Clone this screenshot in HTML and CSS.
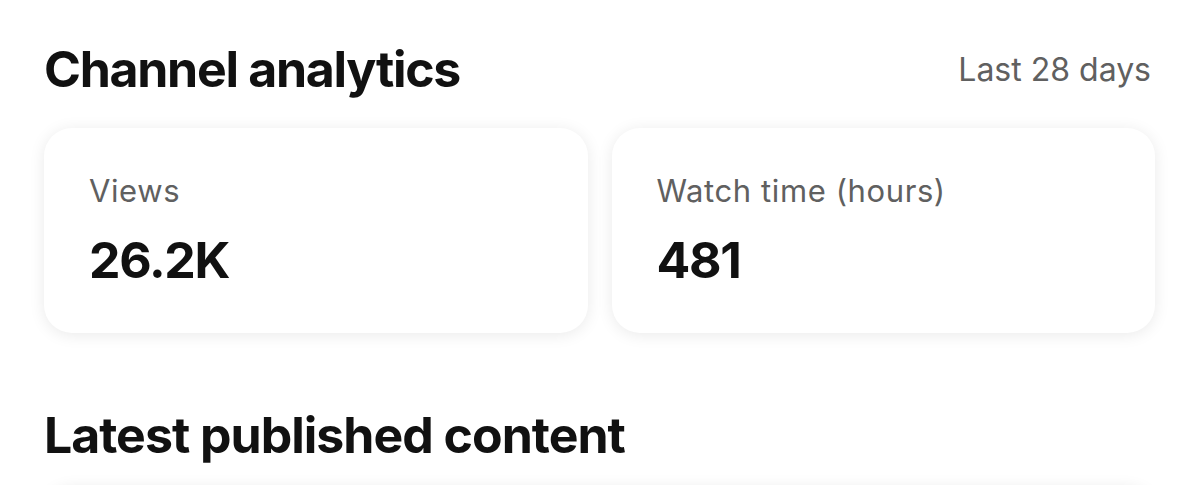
FILE: index.html
```html
<!DOCTYPE html>
<html lang="en">
<head>
<meta charset="utf-8">
<title>Channel analytics</title>
<link rel="stylesheet" href="styles.css">
</head>
<body>
<main class="page">
  <header class="section-head">
    <h1 class="section-title">Channel analytics</h1>
    <span class="period">Last 28 days</span>
  </header>
  <div class="stats">
    <div class="stat-card">
      <div class="stat-label">Views</div>
      <div class="stat-value">26.2K</div>
    </div>
    <div class="stat-card">
      <div class="stat-label">Watch time (hours)</div>
      <div class="stat-value">481</div>
    </div>
  </div>
  <h2 class="section-title latest">Latest published content</h2>
  <div class="content-card"></div>
</main>
</body>
</html>
```
FILE: styles.css
```css
* { box-sizing: border-box; }

html, body {
  margin: 0;
  height: 100%;
  background: #ffffff;
}

body {
  font-family: Inter, "Noto Sans", Roboto, sans-serif;
  color: #111111;
  overflow: hidden;
}

.page {
  height: 100%;
  overflow: hidden;
  padding: 39px 44px 0 44px;
}

.section-head {
  display: flex;
  justify-content: space-between;
  align-items: center;
}

.section-title {
  margin: 0;
  font-size: 50px;
  font-weight: 700;
  line-height: 60px;
  letter-spacing: -1.3px;
  color: #111111;
}

.period {
  font-size: 32px;
  line-height: 40px;
  color: #606060;
  padding-right: 4px;
  margin-top: 2px;
}

.stats {
  display: grid;
  grid-template-columns: 1fr 1fr;
  gap: 24px;
  margin-top: 29px;
}

.stat-card {
  height: 205px;
  background: #ffffff;
  border-radius: 28px;
  box-shadow: 0 2px 16px rgba(0, 0, 0, 0.085);
  padding: 45px 45px 0 45px;
}

.stat-label {
  font-size: 31px;
  line-height: 36px;
  letter-spacing: 0.6px;
  color: #606060;
}

.stat-value {
  margin-top: 23px;
  font-size: 50px;
  font-weight: 700;
  line-height: 56px;
  letter-spacing: -1.3px;
  color: #111111;
}

.latest {
  margin-top: 72px;
  letter-spacing: -1px;
}

.content-card {
  margin-top: 21px;
  height: 160px;
  background: #ffffff;
  border-radius: 28px;
  box-shadow: 0 2px 16px rgba(0, 0, 0, 0.085);
}
```
